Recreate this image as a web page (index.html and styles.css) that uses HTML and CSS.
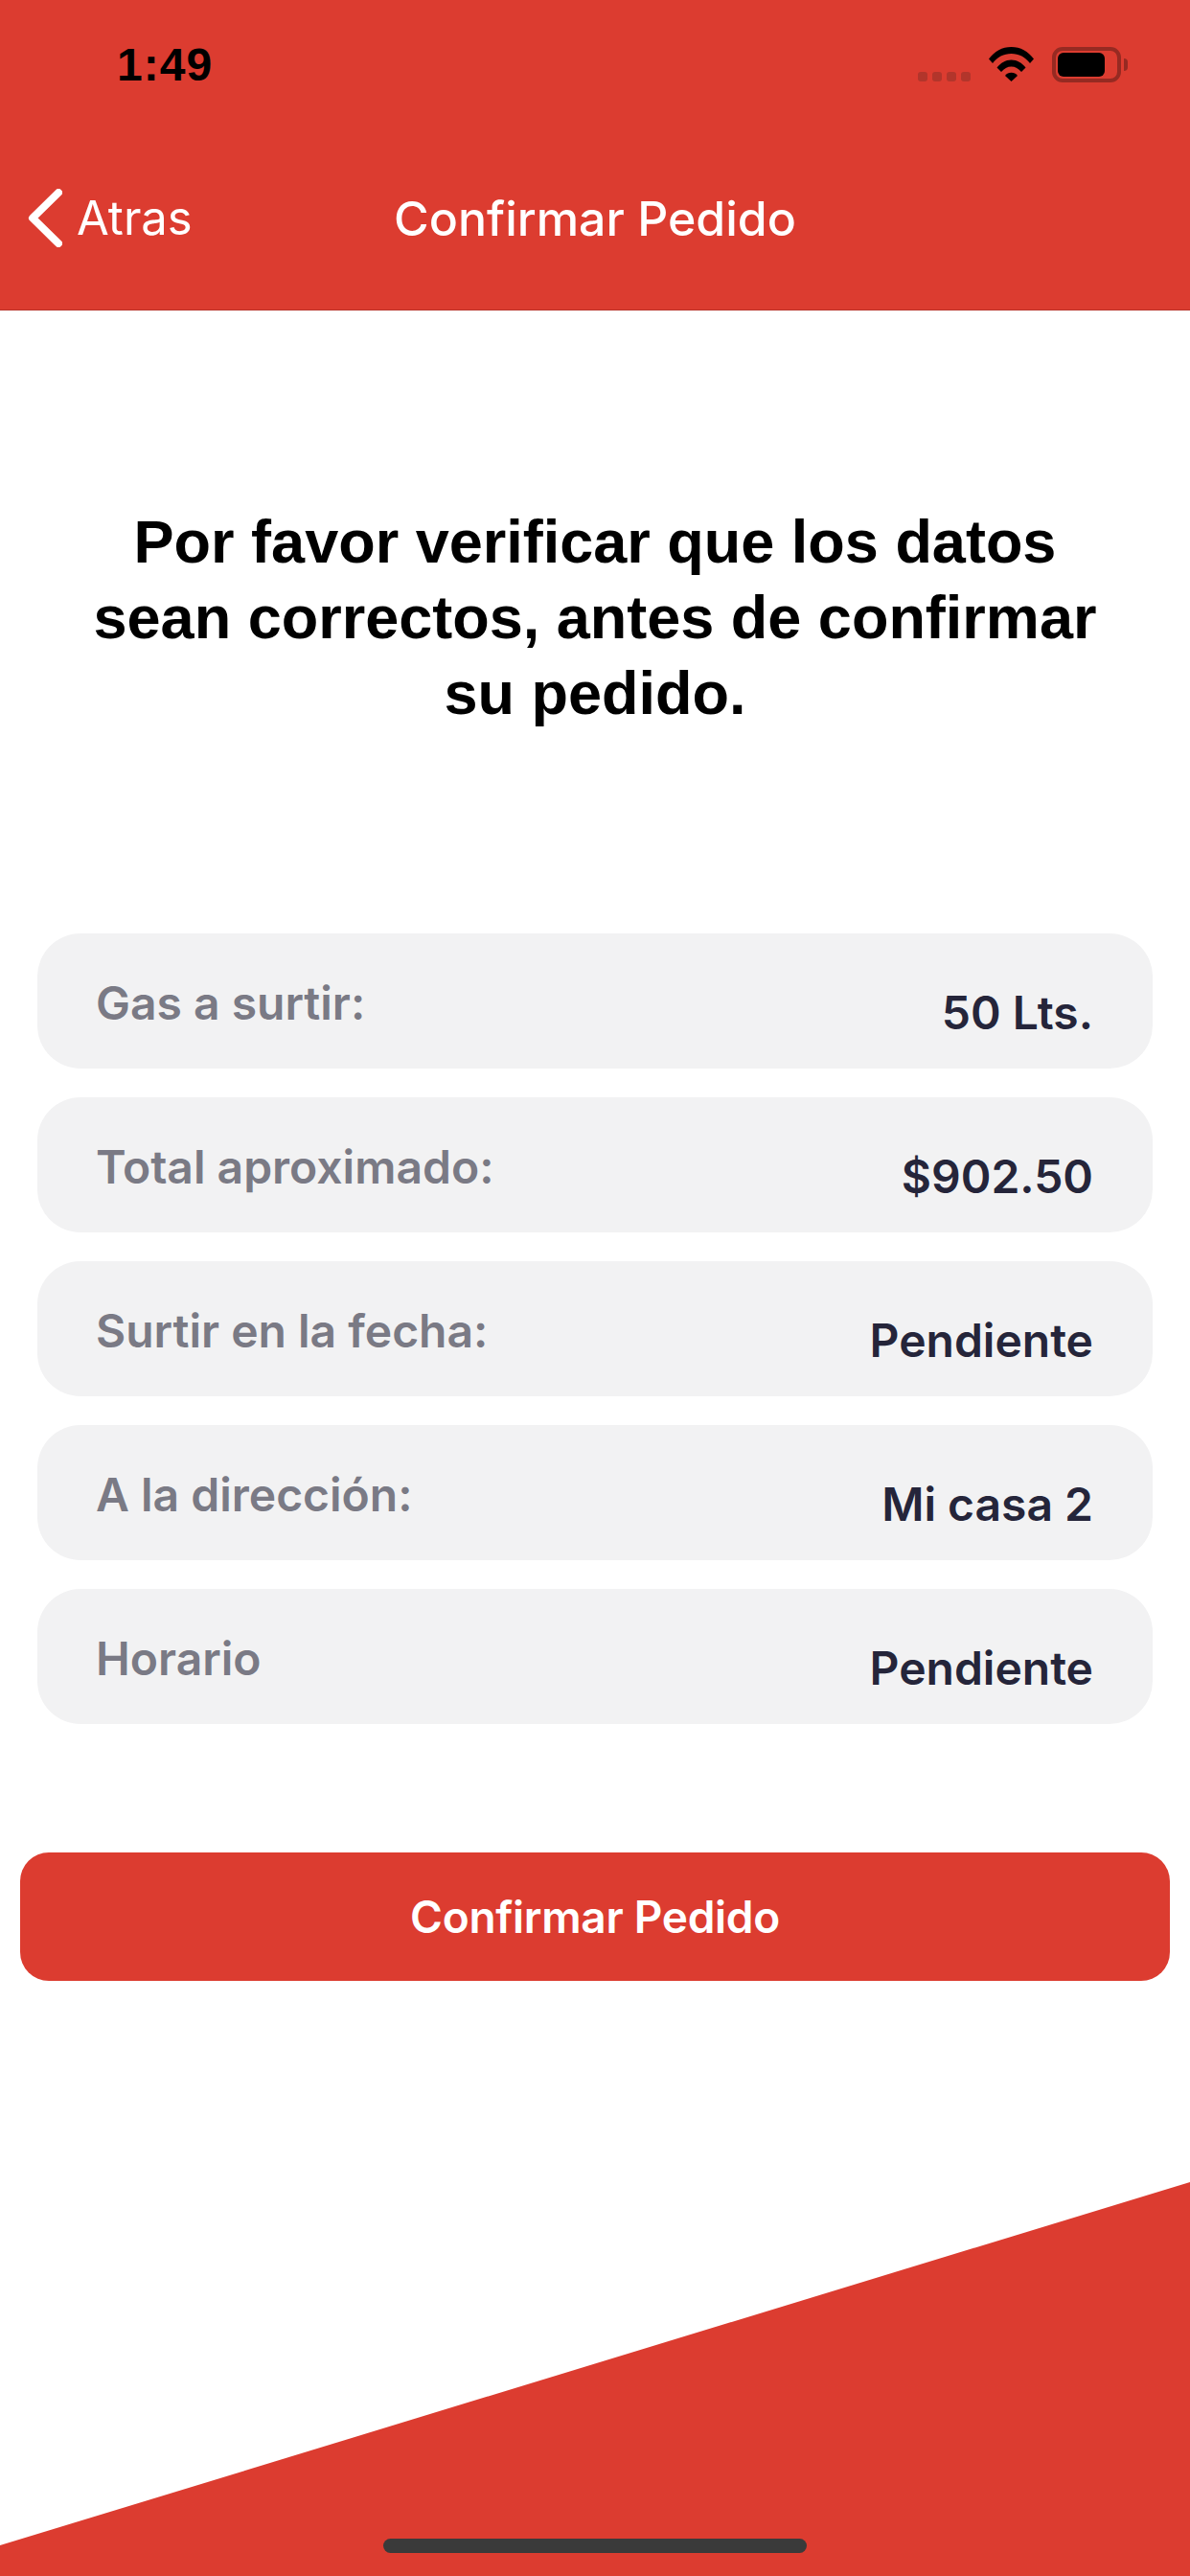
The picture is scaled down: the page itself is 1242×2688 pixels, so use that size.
FILE: index.html
```html
<!DOCTYPE html>
<html lang="es">
<head>
<meta charset="utf-8">
<title>Confirmar Pedido</title>
<link rel="stylesheet" href="styles.css">
</head>
<body>
<div class="screen">
  <header class="header">
    <div class="status">
      <span class="time">1:49</span>
      <div class="status-icons">
        <div class="signal"><i></i><i></i><i></i><i></i></div>
        <svg class="wifi" viewBox="0 0 47 36" width="47" height="36">
          <path d="M0 12.5C6 4.5 14 0 23.5 0S41 4.500 47 12.500L43 17C38 10.500 31.500 7 23.500 7S9 10.500 4 17Z"/>
          <path d="M8.500 21.500C12.500 16.500 17.500 13.500 23.500 13.500S34.500 16.500 38.500 21.500L34 26C31 22.500 27.500 20.500 23.500 20.500S16 22.500 13 26Z"/>
          <path d="M17 30C18.500 28 21 26.800 23.500 26.800S28.500 28 30 30L23.500 36Z"/>
        </svg>
        <div class="battery"><div class="battery-fill"></div></div>
        <div class="battery-cap"></div>
      </div>
    </div>
    <nav class="nav">
      <a class="back">
        <svg class="chevron" viewBox="0 0 36 61" width="36" height="61"><path d="M32 4 L5 30.500 L32 57"/></svg>
        <span>Atras</span>
      </a>
      <h1 class="nav-title">Confirmar Pedido</h1>
    </nav>
  </header>
  <main class="content">
    <p class="intro">Por favor verificar que los datos sean correctos, antes de confirmar su pedido.</p>
    <section class="rows">
      <div class="row"><span class="label">Gas a surtir:</span><span class="value">50 Lts.</span></div>
      <div class="row"><span class="label">Total aproximado:</span><span class="value">$902.50</span></div>
      <div class="row"><span class="label">Surtir en la fecha:</span><span class="value">Pendiente</span></div>
      <div class="row"><span class="label">A la dirección:</span><span class="value">Mi casa 2</span></div>
      <div class="row"><span class="label">Horario</span><span class="value">Pendiente</span></div>
    </section>
    <button class="confirm">Confirmar Pedido</button>
  </main>
  <div class="wedge"></div>
  <div class="home-indicator"></div>
</div>
</body>
</html>
```
FILE: styles.css
```css
* { box-sizing: border-box; }
html, body { margin: 0; padding: 0; background: #fff; }
.screen {
  position: relative;
  width: 1242px;
  height: 2688px;
  overflow: hidden;
  display: flex;
  flex-direction: column;
  font-family: Inter, "Liberation Sans", sans-serif;
}
.header {
  height: 324px;
  background: #dc3c30;
  border-bottom: 1px solid #b8322a;
  display: flex;
  flex-direction: column;
}
.status {
  height: 136px;
  padding: 49px 65px 0 122px;
  display: flex;
  justify-content: space-between;
  align-items: flex-start;
}
.time {
  font-family: "Liberation Sans", sans-serif;
  font-weight: 700;
  font-size: 48px;
  line-height: 38px;
  letter-spacing: 1px;
  color: #000;
}
.status-icons { display: flex; align-items: flex-start; }
.signal { display: flex; gap: 5px; margin: 26px 19px 0 0; }
.signal i { width: 10px; height: 10px; border-radius: 3px; background: #b2352b; }
.wifi { fill: #000; display: block; margin-right: 19px; }
.battery {
  width: 72px;
  height: 37px;
  border: 4px solid #962a22;
  border-radius: 11px;
  padding: 2px;
}
.battery-fill { width: 49px; height: 25px; background: #000; border-radius: 6px; }
.battery-cap {
  width: 4px;
  height: 13px;
  margin: 12px 0 0 3px;
  background: #962a22;
  border-radius: 0 5px 5px 0;
}
.nav {
  position: relative;
  flex: 1;
  display: flex;
  align-items: center;
  justify-content: center;
  padding-bottom: 4px;
  color: #fff;
}
.back {
  position: absolute;
  left: 29px;
  top: 61px;
  display: flex;
  align-items: center;
  gap: 15px;
  font-size: 49px;
  line-height: 61px;
}
.chevron { fill: none; stroke: #fff; stroke-width: 8; stroke-linecap: round; stroke-linejoin: round; display: block; }
.nav-title { margin: 0; font-size: 50px; font-weight: 500; line-height: 60px; }
.content {
  flex: 1;
  display: flex;
  flex-direction: column;
  align-items: center;
}
.intro {
  margin: 202px 0 0;
  width: 1060px;
  text-align: center;
  font-family: "Liberation Sans", sans-serif;
  font-weight: 700;
  font-size: 63px;
  line-height: 79px;
  color: #000;
}
.rows {
  margin-top: 211px;
  width: 1164px;
  display: flex;
  flex-direction: column;
  gap: 30px;
}
.row {
  height: 141px;
  border-radius: 45px;
  background: #f2f2f3;
  padding: 0 62px 0 61px;
  display: flex;
  justify-content: space-between;
}
.label {
  margin-top: 47px;
  font-size: 48px;
  line-height: 52px;
  font-weight: 600;
  color: #7a7a85;
}
.value {
  margin-top: 57px;
  font-size: 48px;
  line-height: 52px;
  font-weight: 600;
  color: #25253a;
}
.confirm {
  margin-top: 134px;
  width: 1200px;
  height: 134px;
  border: 0;
  border-radius: 30px;
  background: #dc3c30;
  color: #fff;
  font-family: inherit;
  font-size: 46px;
  font-weight: 600;
  letter-spacing: -0.3px;
}
.wedge {
  position: absolute;
  left: 0;
  right: 0;
  top: 2277px;
  bottom: 0;
  background: #dc3c30;
  clip-path: polygon(100% 0, 100% 100%, 0 100%, 0 379px);
}
.home-indicator {
  position: absolute;
  left: 400px;
  top: 2649px;
  width: 442px;
  height: 15px;
  border-radius: 8px;
  background: #3a3a3a;
}
```
